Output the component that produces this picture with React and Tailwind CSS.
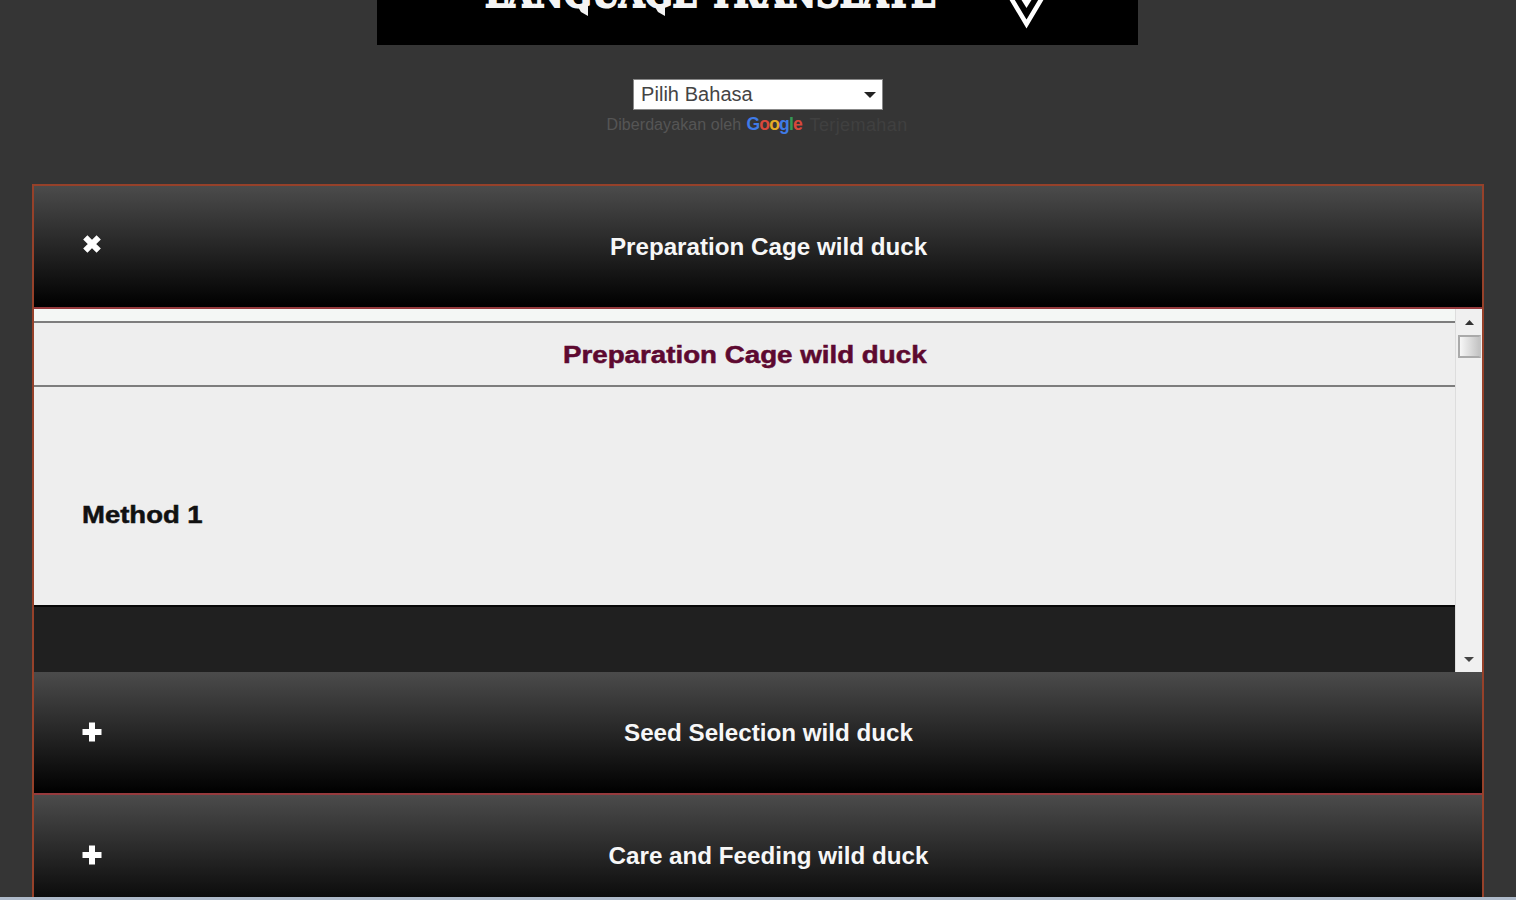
import React from 'react';
import clsx from 'clsx';

const googleLetters = [
  { char: 'G', color: 'text-[#3f7be8]' },
  { char: 'o', color: 'text-[#d9483b]' },
  { char: 'o', color: 'text-[#e5ac25]' },
  { char: 'g', color: 'text-[#3f7be8]' },
  { char: 'l', color: 'text-[#349a55]' },
  { char: 'e', color: 'text-[#d9483b]' },
];

function Banner() {
  return (
    <div className="relative mr-[2px] w-[761px] h-[45px] bg-black overflow-hidden">
      <div className="absolute left-[108px] -top-[32px] origin-left scale-x-[0.82] whitespace-nowrap font-['DejaVu_Serif',serif] text-[40px] leading-[50px] font-bold text-[#f4f4f4] [-webkit-text-stroke:2px_#f4f4f4]">
        LANGUAGE TRANSLATE
      </div>
      {/* pointed tails under both G letters */}
      <svg className="absolute left-[198px] top-0" width="90" height="18" viewBox="0 0 90 18" fill="#f4f4f4">
        <path d="M2 4h11v12l-7-4-3-5z" />
        <path d="M79 4h11v12l-7-4-3-5z" />
      </svg>
      <svg className="absolute left-[630px] top-0" width="38" height="32" viewBox="0 0 38 32">
        <path d="M4 -2L19.500 24L35 -2" fill="none" stroke="#fff" strokeWidth="4.500" />
        <path d="M14.500 0h10l-5 8z" fill="#fff" />
      </svg>
    </div>
  );
}

function LanguagePicker() {
  return (
    <div className="mt-[34px] flex flex-col items-center">
      <div className="w-[250px] h-[31px] bg-white border border-[#888] flex items-center justify-between pl-[7px] pr-[6px]">
        <span className="-mt-[2px] text-[20px] leading-[28px] tracking-[0.05px] text-[#444]">Pilih Bahasa</span>
        <svg width="12" height="6" viewBox="0 0 12 6" fill="#222">
          <path d="M0 0h12L6 6z" />
        </svg>
      </div>
      <div className="mt-[4px] h-[20px] flex items-center whitespace-nowrap text-[16px] leading-[20px] text-[#555]">
        <span className="w-[140px] pt-[2px] tracking-[0.08px]">Diberdayakan oleh</span>
        <span className="w-[63px] text-[17.5px] font-bold tracking-[-0.8px]">
          {googleLetters.map((item, index) => (
            <span key={index} className={item.color}>{item.char}</span>
          ))}
        </span>
        <span className="w-[100px] pt-[2px] text-[18px] tracking-[0.4px] text-[#404040]">Terjemahan</span>
      </div>
    </div>
  );
}

function AccordionHeader({ title, open, divider, className }) {
  return (
    <div
      className={clsx(
        'shrink-0 flex items-center bg-linear-to-b/srgb from-[#4b4b4b] via-[#262626] to-black',
        divider && 'border-b-2 border-[#963a3d]',
        className
      )}
    >
      <div className="w-[68px] flex justify-end">
        <svg width="20" height="20" viewBox="0 0 20 20" className={open ? 'rotate-45 -translate-y-[3px]' : '-translate-y-[1px]'}>
          <path d="M10 0.500v19M0.500 10h19" stroke="#fff" strokeWidth="6" />
        </svg>
      </div>
      <h3 className="flex-1 pr-[47px] pt-[1px] text-center text-[24.2px] leading-[30px] font-bold text-[#f7f7f7]">
        {title}
      </h3>
    </div>
  );
}

function Scrollbar() {
  return (
    <div className="w-[27px] shrink-0 bg-[#f0f0f0] border-l border-[#ddd] flex flex-col items-center">
      <svg className="mt-[11px]" width="9" height="5" viewBox="0 0 9 5" fill="#333">
        <path d="M0 5L4.500 0L9 5z" />
      </svg>
      <div className="mt-[10px] w-[23px] h-[23px] border-2 border-[#aaa] border-r-[#c4c4c4] bg-linear-to-r from-[#f7f7f7] to-[#c4c4c4]" />
      <svg className="mt-auto mb-[10px]" width="10" height="5" viewBox="0 0 10 5" fill="#444">
        <path d="M0 0h10L5 5z" />
      </svg>
    </div>
  );
}

function AccordionContent() {
  return (
    <div className="h-[363px] shrink-0 flex">
      <div className="flex-1 flex flex-col bg-[#eeeeee]">
        <div className="h-[12px] bg-[#f4f7f5]" />
        <div className="h-[66px] border-y-2 border-[#7d7d7d] flex items-center justify-center">
          <h2 className="pt-[2px] scale-x-[1.19] text-[23.3px] leading-[28px] font-bold text-[#5d0930] [-webkit-text-stroke:0.5px_#5d0930]">
            Preparation Cage wild duck
          </h2>
        </div>
        <div className="flex-1 pl-[48px] pt-[114px]">
          <h4 className="w-max origin-left scale-x-[1.18] text-[23.3px] leading-[28px] font-bold text-[#111] [-webkit-text-stroke:0.5px_#111]">
            Method 1
          </h4>
        </div>
        <div className="h-[67px] bg-[#202020] border-t-2 border-[#080808]" />
      </div>
      <Scrollbar />
    </div>
  );
}

function App() {
  return (
    <div className="w-[1516px] h-[900px] overflow-hidden flex flex-col bg-[#353535] font-['Liberation_Sans',Arial,sans-serif]">
      <div className="h-[184px] shrink-0 flex flex-col items-center">
        <Banner />
        <LanguagePicker />
      </div>
      <div className="mx-[32px] h-[713px] overflow-hidden flex flex-col border-2 border-b-0 border-[#96412a]">
        <AccordionHeader title="Preparation Cage wild duck" open divider className="h-[123px]" />
        <AccordionContent />
        <AccordionHeader title="Seed Selection wild duck" divider className="h-[123px]" />
        <AccordionHeader title="Care and Feeding wild duck" className="h-[121px]" />
      </div>
      <div className="h-[3px] bg-[#aebaca]" />
    </div>
  );
}

export default App;
